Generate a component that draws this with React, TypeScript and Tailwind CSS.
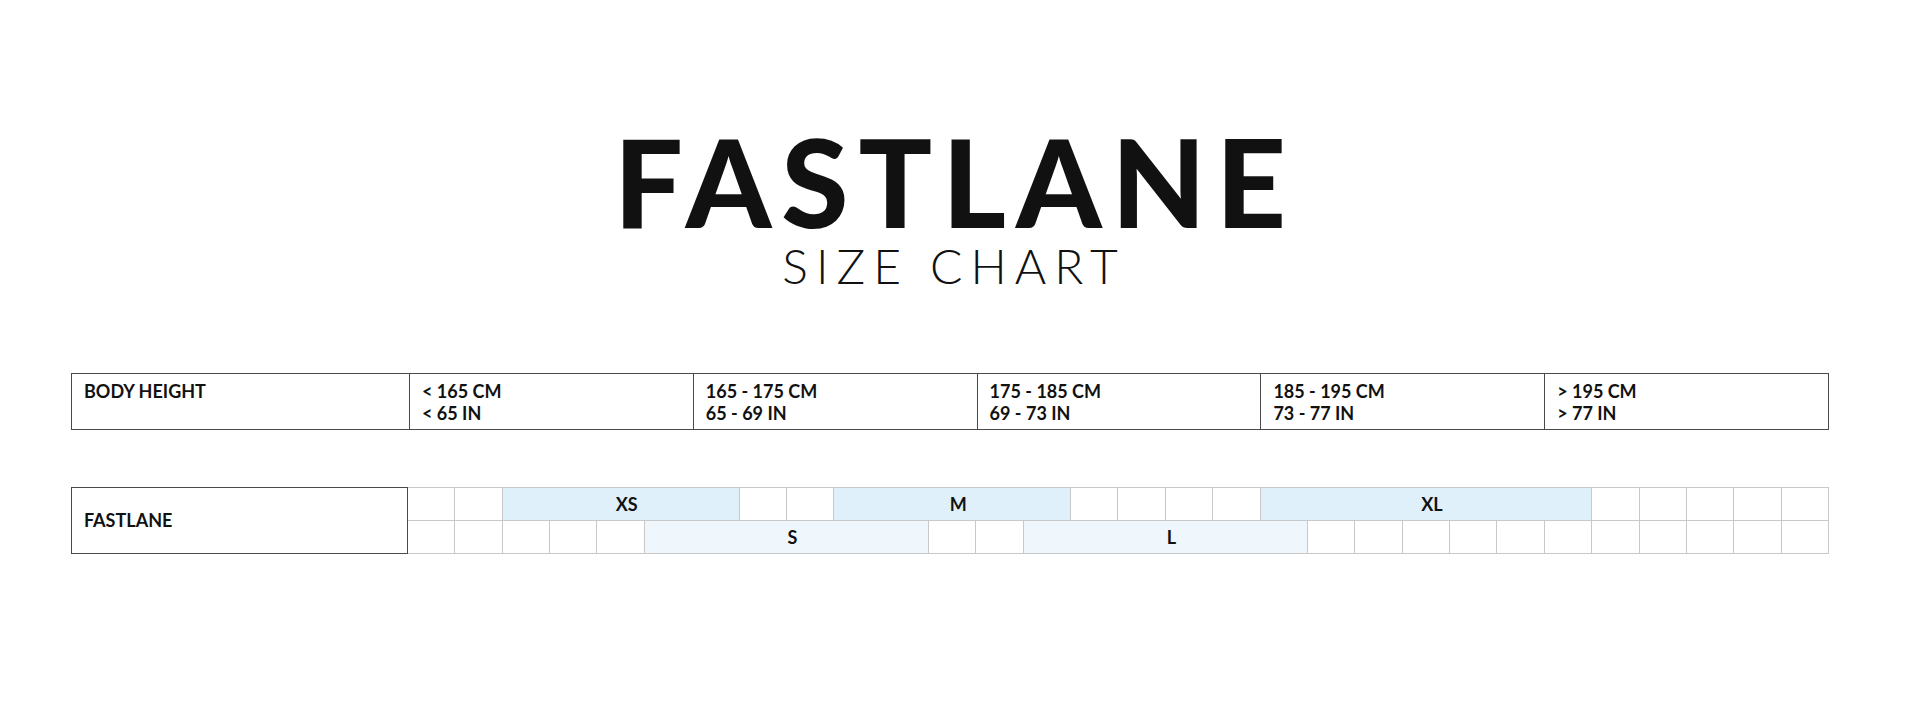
import React from 'react'

const heights = [
  { cm: '< 165 CM', inch: '< 65 IN' },
  { cm: '165 - 175 CM', inch: '65 - 69 IN' },
  { cm: '175 - 185 CM', inch: '69 - 73 IN' },
  { cm: '185 - 195 CM', inch: '73 - 77 IN' },
  { cm: '> 195 CM', inch: '> 77 IN' },
]

type Span = { label?: string; span: number }

// 30 slots under the five height columns, 6 per column
const topRow: Span[] = [
  { span: 1 }, { span: 1 },
  { label: 'XS', span: 5 },
  { span: 1 }, { span: 1 },
  { label: 'M', span: 5 },
  { span: 1 }, { span: 1 }, { span: 1 }, { span: 1 },
  { label: 'XL', span: 7 },
  { span: 1 }, { span: 1 }, { span: 1 }, { span: 1 }, { span: 1 },
]

const bottomRow: Span[] = [
  { span: 1 }, { span: 1 }, { span: 1 }, { span: 1 }, { span: 1 },
  { label: 'S', span: 6 },
  { span: 1 }, { span: 1 },
  { label: 'L', span: 6 },
  ...Array.from({ length: 11 }, () => ({ span: 1 })),
]

const spanClass: Record<number, string> = {
  1: 'col-span-1',
  5: 'col-span-5',
  6: 'col-span-6',
  7: 'col-span-7',
}

function Row({ items, fill }: { items: Span[]; fill: string }) {
  return (
    <>
      {items.map((c, i) => (
        <div
          key={i}
          className={`${spanClass[c.span]} h-[33px] border-r border-b border-[#c8c8c8] flex items-center justify-center text-[18px] font-bold text-[#111] ${c.label ? `${fill} pl-3` : 'bg-white'}`}
        >
          {c.label}
        </div>
      ))}
    </>
  )
}

export default function App() {
  return (
    <div className="w-[1900px] min-h-[716px] bg-white font-['Lato','Liberation_Sans',sans-serif] text-[#111]">
      <div className="pt-[120px] flex flex-col items-center">
        <h1 className="text-[122px] leading-none font-black tracking-[10px] pl-[10px]">FASTLANE</h1>
        <h2 className="text-[48px] leading-none font-light tracking-[8px] pl-[8px]">SIZE CHART</h2>
      </div>

      <div className="mx-[71px] mt-[83px]">
        <div className="grid grid-cols-[337px_repeat(5,minmax(0,1fr))] border border-[#4a4a4a] h-[57px]">
          <div className="pl-3 pt-[6px] text-[18px] leading-[22px] font-bold">BODY HEIGHT</div>
          {heights.map((h) => (
            <div key={h.cm} className="border-l border-[#4a4a4a] pl-3 pt-[6px] text-[18px] leading-[22px] font-bold">
              <div>{h.cm}</div>
              <div>{h.inch}</div>
            </div>
          ))}
        </div>

        <div className="flex mt-[57px]">
          <div className="w-[337px] h-[67px] shrink-0 border border-[#4a4a4a] flex items-center pl-3 text-[18px] font-bold">
            FASTLANE
          </div>
          <div className="flex-1 grid grid-cols-[repeat(30,minmax(0,1fr))] border-t border-[#c8c8c8]">
            <Row items={topRow} fill="bg-[#e0f0fa]" />
            <Row items={bottomRow} fill="bg-[#eff7fd]" />
          </div>
        </div>
      </div>
    </div>
  )
}
